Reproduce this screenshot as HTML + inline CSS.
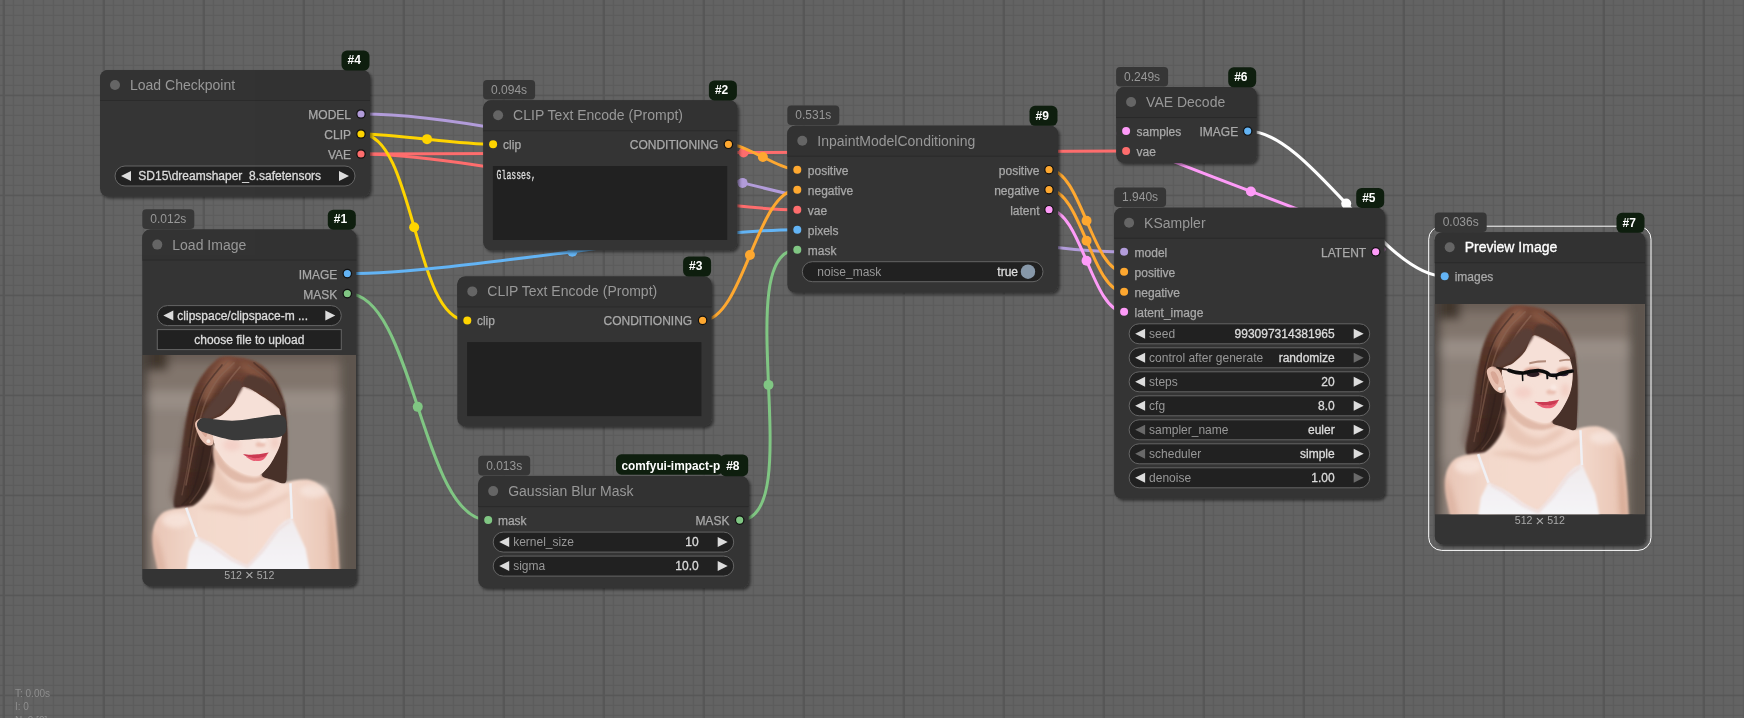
<!DOCTYPE html>
<html lang="en">
<head>
<meta charset="utf-8">
<title>ComfyUI</title>
<style>
html,body{margin:0;padding:0;background:#646464;overflow:hidden}
body{width:1744px;height:718px;position:relative;font-family:"Liberation Sans", Arial, sans-serif}
svg{position:absolute;left:0;top:0;will-change:transform;opacity:.999}
svg text{font-family:"Liberation Sans", Arial, sans-serif}
#stats{position:absolute;left:15px;top:687px;font-size:10px;line-height:13.4px;color:#8e8e8e;white-space:pre}
</style>
</head>
<body>
<svg width="1744" height="718" viewBox="0 0 1744 718">
<defs>
<filter id="sh" x="-10%" y="-10%" width="130%" height="130%"><feDropShadow dx="2" dy="2" stdDeviation="1.5" flood-color="#000" flood-opacity="0.5"/></filter>
</defs>
<rect x="0" y="0" width="1744" height="718" fill="#646464"/>
<path d="M2.85 0h1.3v718h-1.3zM12.85 0h1.3v718h-1.3zM22.85 0h1.3v718h-1.3zM32.85 0h1.3v718h-1.3zM42.85 0h1.3v718h-1.3zM52.85 0h1.3v718h-1.3zM62.85 0h1.3v718h-1.3zM72.85 0h1.3v718h-1.3zM82.85 0h1.3v718h-1.3zM92.85 0h1.3v718h-1.3zM102.85 0h1.3v718h-1.3zM112.85 0h1.3v718h-1.3zM122.85 0h1.3v718h-1.3zM132.85 0h1.3v718h-1.3zM142.85 0h1.3v718h-1.3zM152.85 0h1.3v718h-1.3zM162.85 0h1.3v718h-1.3zM172.85 0h1.3v718h-1.3zM182.85 0h1.3v718h-1.3zM192.85 0h1.3v718h-1.3zM202.85 0h1.3v718h-1.3zM212.85 0h1.3v718h-1.3zM222.85 0h1.3v718h-1.3zM232.85 0h1.3v718h-1.3zM242.85 0h1.3v718h-1.3zM252.85 0h1.3v718h-1.3zM262.85 0h1.3v718h-1.3zM272.85 0h1.3v718h-1.3zM282.85 0h1.3v718h-1.3zM292.85 0h1.3v718h-1.3zM302.85 0h1.3v718h-1.3zM312.85 0h1.3v718h-1.3zM322.85 0h1.3v718h-1.3zM332.85 0h1.3v718h-1.3zM342.85 0h1.3v718h-1.3zM352.85 0h1.3v718h-1.3zM362.85 0h1.3v718h-1.3zM372.85 0h1.3v718h-1.3zM382.85 0h1.3v718h-1.3zM392.85 0h1.3v718h-1.3zM402.85 0h1.3v718h-1.3zM412.85 0h1.3v718h-1.3zM422.85 0h1.3v718h-1.3zM432.85 0h1.3v718h-1.3zM442.85 0h1.3v718h-1.3zM452.85 0h1.3v718h-1.3zM462.85 0h1.3v718h-1.3zM472.85 0h1.3v718h-1.3zM482.85 0h1.3v718h-1.3zM492.85 0h1.3v718h-1.3zM502.85 0h1.3v718h-1.3zM512.85 0h1.3v718h-1.3zM522.85 0h1.3v718h-1.3zM532.85 0h1.3v718h-1.3zM542.85 0h1.3v718h-1.3zM552.85 0h1.3v718h-1.3zM562.85 0h1.3v718h-1.3zM572.85 0h1.3v718h-1.3zM582.85 0h1.3v718h-1.3zM592.85 0h1.3v718h-1.3zM602.85 0h1.3v718h-1.3zM612.85 0h1.3v718h-1.3zM622.85 0h1.3v718h-1.3zM632.85 0h1.3v718h-1.3zM642.85 0h1.3v718h-1.3zM652.85 0h1.3v718h-1.3zM662.85 0h1.3v718h-1.3zM672.85 0h1.3v718h-1.3zM682.85 0h1.3v718h-1.3zM692.85 0h1.3v718h-1.3zM702.85 0h1.3v718h-1.3zM712.85 0h1.3v718h-1.3zM722.85 0h1.3v718h-1.3zM732.85 0h1.3v718h-1.3zM742.85 0h1.3v718h-1.3zM752.85 0h1.3v718h-1.3zM762.85 0h1.3v718h-1.3zM772.85 0h1.3v718h-1.3zM782.85 0h1.3v718h-1.3zM792.85 0h1.3v718h-1.3zM802.85 0h1.3v718h-1.3zM812.85 0h1.3v718h-1.3zM822.85 0h1.3v718h-1.3zM832.85 0h1.3v718h-1.3zM842.85 0h1.3v718h-1.3zM852.85 0h1.3v718h-1.3zM862.85 0h1.3v718h-1.3zM872.85 0h1.3v718h-1.3zM882.85 0h1.3v718h-1.3zM892.85 0h1.3v718h-1.3zM902.85 0h1.3v718h-1.3zM912.85 0h1.3v718h-1.3zM922.85 0h1.3v718h-1.3zM932.85 0h1.3v718h-1.3zM942.85 0h1.3v718h-1.3zM952.85 0h1.3v718h-1.3zM962.85 0h1.3v718h-1.3zM972.85 0h1.3v718h-1.3zM982.85 0h1.3v718h-1.3zM992.85 0h1.3v718h-1.3zM1002.85 0h1.3v718h-1.3zM1012.85 0h1.3v718h-1.3zM1022.85 0h1.3v718h-1.3zM1032.85 0h1.3v718h-1.3zM1042.85 0h1.3v718h-1.3zM1052.85 0h1.3v718h-1.3zM1062.85 0h1.3v718h-1.3zM1072.85 0h1.3v718h-1.3zM1082.85 0h1.3v718h-1.3zM1092.85 0h1.3v718h-1.3zM1102.85 0h1.3v718h-1.3zM1112.85 0h1.3v718h-1.3zM1122.85 0h1.3v718h-1.3zM1132.85 0h1.3v718h-1.3zM1142.85 0h1.3v718h-1.3zM1152.85 0h1.3v718h-1.3zM1162.85 0h1.3v718h-1.3zM1172.85 0h1.3v718h-1.3zM1182.85 0h1.3v718h-1.3zM1192.85 0h1.3v718h-1.3zM1202.85 0h1.3v718h-1.3zM1212.85 0h1.3v718h-1.3zM1222.85 0h1.3v718h-1.3zM1232.85 0h1.3v718h-1.3zM1242.85 0h1.3v718h-1.3zM1252.85 0h1.3v718h-1.3zM1262.85 0h1.3v718h-1.3zM1272.85 0h1.3v718h-1.3zM1282.85 0h1.3v718h-1.3zM1292.85 0h1.3v718h-1.3zM1302.85 0h1.3v718h-1.3zM1312.85 0h1.3v718h-1.3zM1322.85 0h1.3v718h-1.3zM1332.85 0h1.3v718h-1.3zM1342.85 0h1.3v718h-1.3zM1352.85 0h1.3v718h-1.3zM1362.85 0h1.3v718h-1.3zM1372.85 0h1.3v718h-1.3zM1382.85 0h1.3v718h-1.3zM1392.85 0h1.3v718h-1.3zM1402.85 0h1.3v718h-1.3zM1412.85 0h1.3v718h-1.3zM1422.85 0h1.3v718h-1.3zM1432.85 0h1.3v718h-1.3zM1442.85 0h1.3v718h-1.3zM1452.85 0h1.3v718h-1.3zM1462.85 0h1.3v718h-1.3zM1472.85 0h1.3v718h-1.3zM1482.85 0h1.3v718h-1.3zM1492.85 0h1.3v718h-1.3zM1502.85 0h1.3v718h-1.3zM1512.85 0h1.3v718h-1.3zM1522.85 0h1.3v718h-1.3zM1532.85 0h1.3v718h-1.3zM1542.85 0h1.3v718h-1.3zM1552.85 0h1.3v718h-1.3zM1562.85 0h1.3v718h-1.3zM1572.85 0h1.3v718h-1.3zM1582.85 0h1.3v718h-1.3zM1592.85 0h1.3v718h-1.3zM1602.85 0h1.3v718h-1.3zM1612.85 0h1.3v718h-1.3zM1622.85 0h1.3v718h-1.3zM1632.85 0h1.3v718h-1.3zM1642.85 0h1.3v718h-1.3zM1652.85 0h1.3v718h-1.3zM1662.85 0h1.3v718h-1.3zM1672.85 0h1.3v718h-1.3zM1682.85 0h1.3v718h-1.3zM1692.85 0h1.3v718h-1.3zM1702.85 0h1.3v718h-1.3zM1712.85 0h1.3v718h-1.3zM1722.85 0h1.3v718h-1.3zM1732.85 0h1.3v718h-1.3zM1742.85 0h1.3v718h-1.3zM0 4.75h1744v1.3h-1744zM0 14.75h1744v1.3h-1744zM0 24.75h1744v1.3h-1744zM0 34.75h1744v1.3h-1744zM0 44.75h1744v1.3h-1744zM0 54.75h1744v1.3h-1744zM0 64.75h1744v1.3h-1744zM0 74.75h1744v1.3h-1744zM0 84.75h1744v1.3h-1744zM0 94.75h1744v1.3h-1744zM0 104.75h1744v1.3h-1744zM0 114.75h1744v1.3h-1744zM0 124.75h1744v1.3h-1744zM0 134.75h1744v1.3h-1744zM0 144.75h1744v1.3h-1744zM0 154.75h1744v1.3h-1744zM0 164.75h1744v1.3h-1744zM0 174.75h1744v1.3h-1744zM0 184.75h1744v1.3h-1744zM0 194.75h1744v1.3h-1744zM0 204.75h1744v1.3h-1744zM0 214.75h1744v1.3h-1744zM0 224.75h1744v1.3h-1744zM0 234.75h1744v1.3h-1744zM0 244.75h1744v1.3h-1744zM0 254.75h1744v1.3h-1744zM0 264.75h1744v1.3h-1744zM0 274.75h1744v1.3h-1744zM0 284.75h1744v1.3h-1744zM0 294.75h1744v1.3h-1744zM0 304.75h1744v1.3h-1744zM0 314.75h1744v1.3h-1744zM0 324.75h1744v1.3h-1744zM0 334.75h1744v1.3h-1744zM0 344.75h1744v1.3h-1744zM0 354.75h1744v1.3h-1744zM0 364.75h1744v1.3h-1744zM0 374.75h1744v1.3h-1744zM0 384.75h1744v1.3h-1744zM0 394.75h1744v1.3h-1744zM0 404.75h1744v1.3h-1744zM0 414.75h1744v1.3h-1744zM0 424.75h1744v1.3h-1744zM0 434.75h1744v1.3h-1744zM0 444.75h1744v1.3h-1744zM0 454.75h1744v1.3h-1744zM0 464.75h1744v1.3h-1744zM0 474.75h1744v1.3h-1744zM0 484.75h1744v1.3h-1744zM0 494.75h1744v1.3h-1744zM0 504.75h1744v1.3h-1744zM0 514.75h1744v1.3h-1744zM0 524.75h1744v1.3h-1744zM0 534.75h1744v1.3h-1744zM0 544.75h1744v1.3h-1744zM0 554.75h1744v1.3h-1744zM0 564.75h1744v1.3h-1744zM0 574.75h1744v1.3h-1744zM0 584.75h1744v1.3h-1744zM0 594.75h1744v1.3h-1744zM0 604.75h1744v1.3h-1744zM0 614.75h1744v1.3h-1744zM0 624.75h1744v1.3h-1744zM0 634.75h1744v1.3h-1744zM0 644.75h1744v1.3h-1744zM0 654.75h1744v1.3h-1744zM0 664.75h1744v1.3h-1744zM0 674.75h1744v1.3h-1744zM0 684.75h1744v1.3h-1744zM0 694.75h1744v1.3h-1744zM0 704.75h1744v1.3h-1744zM0 714.75h1744v1.3h-1744z" fill="#5d5d5d"/>
<path d="M2.75 0h2.2v718h-2.2zM102.75 0h2.2v718h-2.2zM202.75 0h2.2v718h-2.2zM302.75 0h2.2v718h-2.2zM402.75 0h2.2v718h-2.2zM502.75 0h2.2v718h-2.2zM602.75 0h2.2v718h-2.2zM702.75 0h2.2v718h-2.2zM802.75 0h2.2v718h-2.2zM902.75 0h2.2v718h-2.2zM1002.75 0h2.2v718h-2.2zM1102.75 0h2.2v718h-2.2zM1202.75 0h2.2v718h-2.2zM1302.75 0h2.2v718h-2.2zM1402.75 0h2.2v718h-2.2zM1502.75 0h2.2v718h-2.2zM1602.75 0h2.2v718h-2.2zM1702.75 0h2.2v718h-2.2zM0 94.65h1744v1.7h-1744zM0 194.65h1744v1.7h-1744zM0 294.65h1744v1.7h-1744zM0 394.65h1744v1.7h-1744zM0 494.65h1744v1.7h-1744zM0 594.65h1744v1.7h-1744zM0 694.65h1744v1.7h-1744z" fill="#585858"/>
<g id="links">
<path d="M361 114C554.86 114 930.24 251.8 1124.1 251.8" fill="none" stroke="#B39DDB" stroke-width="3"/>
<circle cx="742.55" cy="182.9" r="5" fill="#B39DDB"/>
<path d="M361 154C470.96 154 687.34 209.7 797.3 209.7" fill="none" stroke="#FF6E6E" stroke-width="3"/>
<circle cx="579.15" cy="181.85" r="5" fill="#FF6E6E"/>
<path d="M361 154C552.28 154 934.82 151.05 1126.1 151.05" fill="none" stroke="#FF6E6E" stroke-width="3"/>
<circle cx="743.55" cy="152.53" r="5" fill="#FF6E6E"/>
<path d="M361 134C394.13 134 459.97 144.3 493.1 144.3" fill="none" stroke="#FFD500" stroke-width="3"/>
<circle cx="427.05" cy="139.15" r="5" fill="#FFD500"/>
<path d="M361 134C414.65 134 413.65 320.4 467.3 320.4" fill="none" stroke="#FFD500" stroke-width="3"/>
<circle cx="414.15" cy="227.2" r="5" fill="#FFD500"/>
<path d="M347.3 273.6C460.33 273.6 684.27 229.7 797.3 229.7" fill="none" stroke="#64B5F6" stroke-width="3"/>
<circle cx="572.3" cy="251.65" r="5" fill="#64B5F6"/>
<path d="M347.3 293.6C413.99 293.6 421.51 520.1 488.2 520.1" fill="none" stroke="#81C784" stroke-width="3"/>
<circle cx="417.75" cy="406.85" r="5" fill="#81C784"/>
<path d="M739.7 520.1C808.82 520.1 728.18 249.7 797.3 249.7" fill="none" stroke="#81C784" stroke-width="3"/>
<circle cx="768.5" cy="384.9" r="5" fill="#81C784"/>
<path d="M728.4 144.3C746.76 144.3 778.94 169.7 797.3 169.7" fill="none" stroke="#FFA931" stroke-width="3"/>
<circle cx="762.85" cy="157" r="5" fill="#FFA931"/>
<path d="M702.6 320.4C742.95 320.4 756.95 189.7 797.3 189.7" fill="none" stroke="#FFA931" stroke-width="3"/>
<circle cx="749.95" cy="255.05" r="5" fill="#FFA931"/>
<path d="M1049 169.7C1080.69 169.7 1092.41 271.8 1124.1 271.8" fill="none" stroke="#FFA931" stroke-width="3"/>
<circle cx="1086.55" cy="220.75" r="5" fill="#FFA931"/>
<path d="M1049 189.7C1080.69 189.7 1092.41 291.8 1124.1 291.8" fill="none" stroke="#FFA931" stroke-width="3"/>
<circle cx="1086.55" cy="240.75" r="5" fill="#FFA931"/>
<path d="M1049 209.7C1080.69 209.7 1092.41 311.8 1124.1 311.8" fill="none" stroke="#FF9CF9" stroke-width="3"/>
<circle cx="1086.55" cy="260.75" r="5" fill="#FF9CF9"/>
<path d="M1375.7 251.8C1445.02 251.8 1056.78 131.05 1126.1 131.05" fill="none" stroke="#FF9CF9" stroke-width="3"/>
<circle cx="1250.9" cy="191.43" r="5" fill="#FF9CF9"/>
<path d="M1247.7 131.05C1308.87 131.05 1383.53 276.2 1444.7 276.2" fill="none" stroke="#ffffff" stroke-width="3"/>
<circle cx="1346.2" cy="203.62" r="5" fill="#ffffff"/>
</g>
<g id="nodes">
<rect x="100" y="70" width="270" height="126.5" rx="8" fill="#353535" filter="url(#sh)"/>
<path d="M100 100v-22a8 8 0 0 1 8-8h254a8 8 0 0 1 8 8v22z" fill="#333"/>
<rect x="100" y="100" width="270" height="1" fill="#2b2b2b"/>
<circle cx="115" cy="85" r="5" fill="#666"/>
<text x="130" y="90" font-size="14" fill="#999">Load Checkpoint</text>
<circle cx="361" cy="114" r="4.2" fill="#B39DDB" stroke="#111" stroke-width="1.2"/>
<text x="351" y="118.9" font-size="12" fill="#aaa" text-anchor="end" stroke="#aaa" stroke-width=".25">MODEL</text>
<circle cx="361" cy="134" r="4.2" fill="#FFD500" stroke="#111" stroke-width="1.2"/>
<text x="351" y="138.9" font-size="12" fill="#aaa" text-anchor="end" stroke="#aaa" stroke-width=".25">CLIP</text>
<circle cx="361" cy="154" r="4.2" fill="#FF6E6E" stroke="#111" stroke-width="1.2"/>
<text x="351" y="158.9" font-size="12" fill="#aaa" text-anchor="end" stroke="#aaa" stroke-width=".25">VAE</text>
<rect x="115" y="166" width="240" height="20" rx="10" fill="#222" stroke="#666" stroke-width="1"/>
<path d="M131 171L121 176L131 181z" fill="#ddd"/>
<path d="M339 171L349 176L339 181z" fill="#ddd"/>
<text x="138.3" y="179.9" font-size="12" fill="#ddd" stroke="#ddd" stroke-width=".3">SD15\dreamshaper_8.safetensors</text>
<rect x="341.5" y="50.6" width="28" height="20" rx="5.5" fill="#0f1f0f"/>
<text x="347.5" y="64.3" font-size="12" fill="#fff" font-weight="bold">#4</text>
<rect x="142.3" y="229.6" width="214" height="356.6" rx="8" fill="#353535" filter="url(#sh)"/>
<path d="M142.3 259.6v-22a8 8 0 0 1 8-8h198a8 8 0 0 1 8 8v22z" fill="#333"/>
<rect x="142.3" y="259.6" width="214" height="1" fill="#2b2b2b"/>
<circle cx="157.3" cy="244.6" r="5" fill="#666"/>
<text x="172.3" y="249.6" font-size="14" fill="#999">Load Image</text>
<circle cx="347.3" cy="273.6" r="4.2" fill="#64B5F6" stroke="#111" stroke-width="1.2"/>
<text x="337.3" y="278.5" font-size="12" fill="#aaa" text-anchor="end" stroke="#aaa" stroke-width=".25">IMAGE</text>
<circle cx="347.3" cy="293.6" r="4.2" fill="#81C784" stroke="#111" stroke-width="1.2"/>
<text x="337.3" y="298.5" font-size="12" fill="#aaa" text-anchor="end" stroke="#aaa" stroke-width=".25">MASK</text>
<rect x="157.3" y="305.6" width="184" height="20" rx="10" fill="#222" stroke="#666" stroke-width="1"/>
<path d="M173.3 310.6L163.3 315.6L173.3 320.6z" fill="#ddd"/>
<path d="M325.3 310.6L335.3 315.6L325.3 320.6z" fill="#ddd"/>
<text x="177.3" y="319.5" font-size="12" fill="#ddd" stroke="#ddd" stroke-width=".3">clipspace/clipspace-m ...</text>
<rect x="157.3" y="329.6" width="184" height="20" fill="#222" stroke="#666" stroke-width="1"/>
<text x="249.3" y="343.6" font-size="12" fill="#ddd" text-anchor="middle" stroke="#ddd" stroke-width=".3">choose file to upload</text>
<g transform="translate(142 354.90) scale(1.0000)" clip-path="url(#clipA)">
<defs>
<clipPath id="clipA"><rect x="0" y="0" width="214" height="214"/></clipPath>
<filter id="b1A" filterUnits="userSpaceOnUse" x="-20" y="-20" width="254" height="254"><feGaussianBlur stdDeviation="0.9"/></filter>
<filter id="b2A" filterUnits="userSpaceOnUse" x="-20" y="-20" width="254" height="254"><feGaussianBlur stdDeviation="2.5"/></filter>
<filter id="b3A" filterUnits="userSpaceOnUse" x="-20" y="-20" width="254" height="254"><feGaussianBlur stdDeviation="5"/></filter>
<filter id="b0A" filterUnits="userSpaceOnUse" x="-20" y="-20" width="254" height="254"><feGaussianBlur stdDeviation="0.45"/></filter>
<linearGradient id="hairA" x1="0" y1="0" x2="0" y2="1"><stop offset="0" stop-color="#7a4c3c"/><stop offset=".3" stop-color="#573529"/><stop offset="1" stop-color="#3e2822"/></linearGradient>
<linearGradient id="skinA" x1="0" y1="0" x2="1" y2="0"><stop offset="0" stop-color="#e9c6b6"/><stop offset=".25" stop-color="#f4dacd"/><stop offset=".7" stop-color="#f6ddd1"/><stop offset="1" stop-color="#e8c3b1"/></linearGradient>
<linearGradient id="dressA" x1="0" y1="0" x2="0" y2="1"><stop offset="0" stop-color="#f1ecee"/><stop offset="1" stop-color="#f6f6f9"/></linearGradient>
</defs>
<rect x="0" y="0" width="214" height="214" fill="#8a7f77"/>
<g filter="url(#b3A)">
<rect x="-10" y="-10" width="240" height="46" fill="#82766d"/>
<rect x="-10" y="-14" width="240" height="22" fill="#6a5f57"/>
<rect x="-14" y="-14" width="40" height="30" fill="#43382f"/>
<rect x="-10" y="36" width="240" height="18" fill="#9a8f87"/>
<rect x="-10" y="54" width="70" height="170" fill="#8d827a"/>
<rect x="140" y="54" width="60" height="100" fill="#938982"/>
<rect x="-12" y="-10" width="18" height="240" fill="#4e4642"/>
<rect x="198" y="-10" width="30" height="240" fill="#5f5650"/>
<rect x="8" y="100" width="30" height="60" fill="#968b83"/>
</g>
<path d="M84 1C76.7 1.2 74.9 4.4 70.7 8C66.5 11.6 62 17.7 58.7 22.6C55.4 27.5 53 32.6 51 37.6C49 42.6 47.8 47.6 46.6 52.6C45.4 57.6 44.5 62.7 43.6 67.7C42.7 72.7 42.1 77.7 41.4 82.7C40.7 87.7 40.2 91.6 39.4 97.8C38.5 104 37.5 110.9 36.3 120C35.1 129.1 30 146.8 32.3 152.3C34.6 157.8 43.7 155.1 50 153C56.3 150.9 61.7 143.8 70 140C78.3 136.2 89.5 132 100 130C110.5 128 126 128.3 133 128C140 127.7 140.1 130.3 142 128C143.9 125.7 143.9 120.4 144.5 114C145.1 107.6 145.2 97.2 145.3 89.5C145.4 81.8 145.4 75.2 144.8 68C144.2 60.8 144 53.7 142 46.5C140 39.3 137.6 31.6 133 25C128.4 18.4 122.7 11 114.5 7C106.3 3 91.3 0.8 84 1Z" fill="url(#hairA)" filter="url(#b1A)"/>
<path d="M44 60C42.3 61.7 38.7 86.7 36 100C33.3 113.3 27.3 131.7 28 140C28.7 148.3 37 158.3 40 150C43 141.7 45.3 105 46 90C46.7 75 45.7 58.3 44 60Z" fill="#5b4038" opacity=".35" filter="url(#b2A)"/>
<path d="M82 6C78 8 71.7 16 68 22C64.3 28 60.3 38 60 42C59.7 46 63 48.7 66 46C69 43.3 73.7 32 78 26C82.3 20 91.3 13.3 92 10C92.7 6.7 86 4 82 6Z" fill="#a8745c" opacity=".55" filter="url(#b2A)"/>
<path d="M104 8C107.3 9 113.7 13.3 118 18C122.3 22.7 129 32.7 130 36C131 39.3 127.3 40.3 124 38C120.7 35.7 114.3 26.3 110 22C105.7 17.7 99 14.3 98 12C97 9.7 100.7 7 104 8Z" fill="#93604a" opacity=".6" filter="url(#b2A)"/>
<path d="M60 70C57 74.3 53.7 97.3 52 110C50.3 122.7 48 141.3 50 146C52 150.7 60.7 144 64 138C67.3 132 69 119 70 110C71 101 71.7 90.7 70 84C68.3 77.3 63 65.7 60 70Z" fill="#33221f" opacity=".55" filter="url(#b2A)"/>
<path d="M92 8C89.3 10.7 80.7 17.7 76 24C71.3 30.3 67.3 38 64 46C60.7 54 58.3 63 56 72C53.7 81 52 90.3 50 100C48 109.7 45 125 44 130" fill="none" stroke="#8b6757" stroke-width="1.6" opacity="0.55" stroke-linecap="round" filter="url(#b0A)"/>
<path d="M86 6C83 9.3 73 18.3 68 26C63 33.7 59 43 56 52C53 61 51.7 70.3 50 80C48.3 89.7 47.7 100 46 110C44.3 120 41 135 40 140" fill="none" stroke="#7a584a" stroke-width="1.4" opacity="0.5" stroke-linecap="round" filter="url(#b0A)"/>
<path d="M98 12C95.7 15 88.3 23.3 84 30C79.7 36.7 75.3 46.3 72 52C68.7 57.7 65.3 62 64 64" fill="none" stroke="#9a7563" stroke-width="1.6" opacity="0.5" stroke-linecap="round" filter="url(#b0A)"/>
<path d="M80 10C77 14 66.7 25.3 62 34C57.3 42.7 54.5 52.3 52 62C49.5 71.7 47.8 87 47 92" fill="none" stroke="#2f1f1c" stroke-width="1.6" opacity="0.45" stroke-linecap="round" filter="url(#b0A)"/>
<path d="M70 92C69.3 95.3 68 105 66 112C64 119 61 128 58 134C55 140 49.7 145.7 48 148" fill="none" stroke="#6e4f43" stroke-width="1.4" opacity="0.5" stroke-linecap="round" filter="url(#b0A)"/>
<path d="M62 92C61.2 96 59 108.3 57 116C55 123.7 52.8 132.3 50 138C47.2 143.7 41.7 148 40 150" fill="none" stroke="#2f1f1c" stroke-width="1.8" opacity="0.4" stroke-linecap="round" filter="url(#b0A)"/>
<path d="M106 10C108.7 12 117.3 17 122 22C126.7 27 130.8 33.7 134 40C137.2 46.3 139.8 56.7 141 60" fill="none" stroke="#7b5a4c" stroke-width="1.4" opacity="0.5" stroke-linecap="round" filter="url(#b0A)"/>
<path d="M112 8C115 10.7 125.3 18 130 24C134.7 30 138.3 40.7 140 44" fill="none" stroke="#2f1f1c" stroke-width="1.6" opacity="0.4" stroke-linecap="round" filter="url(#b0A)"/>
<path d="M16 216L11.8 197C9 180 10 165 22 157C32 152.5 44 152.5 51 151C58 147 66 137 70.9 125L73 111L71 89L119 100L119.6 121C128 124 136 126.5 143 127.8C150 125.5 160 123.5 168 125C180 128 190 140 193 158L196 190L197.5 216Z" fill="url(#skinA)" filter="url(#b1A)"/>
<path d="M73 94C75.2 95 80.7 105.8 85 110C89.3 114.2 94.5 116.9 99 119C103.5 121.1 108.5 122.2 112 122.5C115.5 122.8 117.7 120.9 120 121C122.3 121.1 127.3 121.8 126 123C124.7 124.2 117.3 127.5 112 128C106.7 128.5 99.3 128 94 126C88.7 124 83.7 119.7 80 116C76.3 112.3 73.2 107.7 72 104C70.8 100.3 70.8 93 73 94Z" fill="#dcb19f" opacity=".75" filter="url(#b1A)"/>
<path d="M73 108C75 107.3 78.2 117.7 82 122C85.8 126.3 91.3 131.7 96 134C100.7 136.3 105.3 137 110 136C114.7 135 120 129.3 124 128C128 126.7 134.7 126 134 128C133.3 130 125.7 137 120 140C114.3 143 106.7 146 100 146C93.3 146 85 143.3 80 140C75 136.7 71.2 131.3 70 126C68.8 120.7 71 108.7 73 108Z" fill="#e3bba9" opacity=".6" filter="url(#b2A)"/>
<path d="M56 152C56.3 151 72 149.7 80 150C88 150.3 95.7 154.7 104 154C112.3 153.3 123 148.7 130 146C137 143.3 143.3 138.7 146 138C148.7 137.3 149 139.7 146 142C143 144.3 135 149 128 152C121 155 112.3 159.3 104 160C95.7 160.7 86 157.3 78 156C70 154.7 55.7 153 56 152Z" fill="#dcb09c" opacity=".5" filter="url(#b2A)"/>
<ellipse cx="172" cy="136" rx="14" ry="7" fill="#fbeee8" opacity=".6" filter="url(#b2A)"/>
<ellipse cx="34" cy="165" rx="14" ry="8" fill="#fbeae2" opacity=".7" filter="url(#b2A)"/>
<path d="M187 150C187.8 148.3 190.5 159 192 170C193.5 181 196.5 208.3 196 216C195.5 223.7 190.5 222 189 216C187.5 210 187.3 191 187 180C186.7 169 186.2 151.7 187 150Z" fill="#c9977f" opacity=".5" filter="url(#b2A)"/>
<path d="M10 176C9 177.7 11 193.3 12 200C13 206.7 14 213.3 16 216C18 218.7 23.7 220.3 24 216C24.3 211.7 20.3 196.7 18 190C15.7 183.3 11 174.3 10 176Z" fill="#d2a38f" opacity=".45" filter="url(#b2A)"/>
<path d="M100.7 32C105 30.7 111.9 36.3 118 40C124.1 43.7 133.8 49.5 137.5 54.2C141.2 58.9 140 63.4 140.4 68C140.8 72.6 140.5 77.6 139.8 82C139.1 86.4 138.3 89.9 136.3 94.5C134.3 99.1 130.8 105.8 128 109.8C125.2 113.8 122.4 117 119.6 118.8C116.8 120.6 114.8 121 111.3 120.8C107.8 120.6 103.1 119.5 98.7 117.4C94.3 115.3 88.8 112.1 84.8 108.4C80.8 104.7 77.5 99.7 75 95C72.5 90.3 71 84.8 70 80C69 75.2 67.3 69.3 69 66C70.7 62.7 76.2 63 80 60C83.8 57 88.5 52.7 92 48C95.5 43.3 96.4 33.3 100.7 32Z" fill="#f7e1d8" filter="url(#b0A)"/>
<path d="M53 69C53 66.6 54.7 65.3 56 64.5C57.3 63.7 59.3 63.4 61 64C62.7 64.6 64.5 65.7 66 68C67.5 70.3 69.1 74.7 70 78C70.9 81.3 72 85.9 71.5 88C71 90.1 68.8 90.7 67 90.5C65.2 90.3 62.8 88.9 61 87C59.2 85.1 57.3 82 56 79C54.7 76 53 71.4 53 69Z" fill="#e9c2b2" filter="url(#b0A)"/>
<path d="M57 70C57.2 68.5 59.7 68 61 69C62.3 70 64.5 73.8 65 76C65.5 78.2 64.8 81.7 64 82C63.2 82.3 61.2 80 60 78C58.8 76 56.8 71.5 57 70Z" fill="#d39e8c" opacity=".7" filter="url(#b0A)"/>
<circle cx="66.4" cy="86.3" r="1.9" fill="#f6ebe4" filter="url(#b0A)"/>
<ellipse cx="90" cy="90" rx="9" ry="6" fill="#f3c4bb" opacity=".55" filter="url(#b2A)"/>
<ellipse cx="133" cy="88" rx="4" ry="7" fill="#f0c0b4" opacity=".55" filter="url(#b2A)"/>
<ellipse cx="118.5" cy="89.6" rx="5" ry="2.6" fill="#e9bcae" opacity=".85" filter="url(#b1A)"/>
<ellipse cx="121" cy="85" rx="3.2" ry="3" fill="#fbece6" opacity=".8" filter="url(#b1A)"/>
<path d="M104 101.6C104.5 101.3 109.3 102.9 112 103C114.7 103.1 117.8 102.6 120 102C122.2 101.4 125.2 99 125.4 99.4C125.6 99.8 123.1 103.5 121.4 104.6C119.7 105.7 117.5 106.1 115.4 106.2C113.3 106.3 110.9 105.8 109 105C107.1 104.2 103.5 101.9 104 101.6Z" fill="#ea5f75" filter="url(#b0A)"/>
<path d="M101.3 99.6C101.3 99.1 105.7 99.9 108 99.9C110.3 99.9 113.2 99.6 115.4 99.4C117.6 99.2 119.1 98.9 121 98.6C122.9 98.3 126.4 97.1 126.6 97.6C126.8 98.1 123.9 100.9 122 101.8C120.1 102.7 117.3 103.1 115 103.2C112.7 103.3 110.3 103.2 108 102.6C105.7 102 101.3 100 101.3 99.6Z" fill="#cc3b52" filter="url(#b0A)"/>
<path d="M137.5 54C137.3 57 140.4 63.3 140.8 68C141.2 72.7 140.9 77.5 140.2 82C139.5 86.5 138.6 90.3 136.6 95C134.6 99.7 131.2 105.7 128.4 110C125.6 114.3 119.7 118.2 120 120.6C120.3 123 126.2 123.4 130 124.6C133.8 125.8 140.5 129.8 143 128C145.5 126.2 144.4 120.4 144.8 114C145.2 107.6 145.4 97.2 145.4 89.5C145.4 81.8 145.4 74.6 144.8 68C144.2 61.4 143.2 52.3 142 50C140.8 47.7 137.7 51 137.5 54Z" fill="#49322c" filter="url(#b0A)"/>
<path d="M101 30C101.3 33.3 95.5 41.3 92 46C88.5 50.7 84 55 80 58C76 61 71.3 63.3 68 64C64.7 64.7 59.3 65.3 60 62C60.7 58.7 67 50 72 44C77 38 85.2 28.3 90 26C94.8 23.7 100.7 26.7 101 30Z" fill="#5a3f37" filter="url(#b1A)"/>
<path d="M101 30C102.7 33 111.8 34.2 118 38C124.2 41.8 134 51.3 138 53C142 54.7 143.7 52.2 142 48C140.3 43.8 133.7 32.7 128 28C122.3 23.3 112.5 19.7 108 20C103.5 20.3 99.3 27 101 30Z" fill="#543a33" filter="url(#b1A)"/>
<path d="M54.9 69.6C54.8 67.9 55.8 66.1 57 65C58.2 63.9 59 63.1 62 63C65 62.9 70.3 64.1 75 64.6C79.7 65.1 85.2 65.8 90 65.8C94.8 65.8 99 65.2 104 64.6C109 64 114.7 62.8 120 62C125.3 61.2 132.2 59.6 136 59.8C139.8 60 141.6 61.1 143 63C144.4 64.9 144.6 68.5 144.6 71C144.6 73.5 144.4 76.1 143 78C141.6 79.9 140.2 81.4 136 82.3C131.8 83.2 124 83.1 118 83.6C112 84 104.7 84.8 100 85C95.3 85.2 94 85.5 90 85C86 84.5 80.3 82.9 76 81.8C71.7 80.7 67.1 79.3 64 78.2C60.9 77.1 59 76.8 57.5 75.4C56 74 55 71.3 54.9 69.6Z" fill="#3a3a3a" filter="url(#b0A)"/>
<path d="M54.7 181.5 L61 185 L68.5 188 L78 194 L90 203 L100 208.5 L105.3 210.6 L112 204 L120.6 193.7 L128 183 L136 172.3 L143 166 L149.8 163 L156 177 L163.6 193.7 L168.2 218 L44 218 L47 197Z" fill="url(#dressA)" filter="url(#b1A)"/>
<path d="M57 184 L68.5 190 L90 205 L105.3 212 L120.6 196 L136 175 L148 166" fill="none" stroke="#efdcd9" stroke-width="3" opacity=".7" filter="url(#b1A)"/>
<path d="M44.2 153L54.8 182" stroke="#f1f1f5" stroke-width="2.6" fill="none" filter="url(#b0A)"/>
<path d="M148.4 128.5L149.9 164" stroke="#f1f1f5" stroke-width="2.5" fill="none" filter="url(#b0A)"/>
</g>
<text x="249.3" y="578.6" font-size="10.6" fill="#aaa" text-anchor="middle">512 <tspan font-size="15" dy="1.2">×</tspan><tspan dy="-1.2"> </tspan>512</text>
<rect x="327.8" y="209.7" width="28" height="20" rx="5.5" fill="#0f1f0f"/>
<text x="333.8" y="223.4" font-size="12" fill="#fff" font-weight="bold">#1</text>
<rect x="142.3" y="209.3" width="52" height="19.6" rx="4" fill="#373737"/>
<text x="150.3" y="223" font-size="12" fill="#999">0.012s</text>
<rect x="483.1" y="100.3" width="254.3" height="150" rx="8" fill="#353535" filter="url(#sh)"/>
<path d="M483.1 130.3v-22a8 8 0 0 1 8-8h238.3a8 8 0 0 1 8 8v22z" fill="#333"/>
<rect x="483.1" y="130.3" width="254.3" height="1" fill="#2b2b2b"/>
<circle cx="498.1" cy="115.3" r="5" fill="#666"/>
<text x="513.1" y="120.3" font-size="14" fill="#999">CLIP Text Encode (Prompt)</text>
<circle cx="493.1" cy="144.3" r="4" fill="#FFD500"/>
<text x="503.1" y="149.2" font-size="12" fill="#aaa" stroke="#aaa" stroke-width=".25">clip</text>
<circle cx="728.4" cy="144.3" r="4.2" fill="#FFA931" stroke="#111" stroke-width="1.2"/>
<text x="718.4" y="149.2" font-size="12" fill="#aaa" text-anchor="end" stroke="#aaa" stroke-width=".25">CONDITIONING</text>
<rect x="492.9" y="166" width="234.3" height="74" fill="#222"/>
<text x="496.6" y="178.6" font-size="13.3" fill="#ddd" style='font-family:"Liberation Mono", "DejaVu Sans Mono", monospace' textLength="39.2" lengthAdjust="spacingAndGlyphs" stroke="#ddd" stroke-width=".35">Glasses,</text>
<rect x="708.9" y="80.4" width="28" height="20" rx="5.5" fill="#0f1f0f"/>
<text x="714.9" y="94.1" font-size="12" fill="#fff" font-weight="bold">#2</text>
<rect x="483.1" y="80" width="52" height="19.6" rx="4" fill="#373737"/>
<text x="491.1" y="93.7" font-size="12" fill="#999">0.094s</text>
<rect x="457.3" y="276.4" width="254.3" height="150" rx="8" fill="#353535" filter="url(#sh)"/>
<path d="M457.3 306.4v-22a8 8 0 0 1 8-8h238.3a8 8 0 0 1 8 8v22z" fill="#333"/>
<rect x="457.3" y="306.4" width="254.3" height="1" fill="#2b2b2b"/>
<circle cx="472.3" cy="291.4" r="5" fill="#666"/>
<text x="487.3" y="296.4" font-size="14" fill="#999">CLIP Text Encode (Prompt)</text>
<circle cx="467.3" cy="320.4" r="4" fill="#FFD500"/>
<text x="476.9" y="325.3" font-size="12" fill="#aaa" stroke="#aaa" stroke-width=".25">clip</text>
<circle cx="702.6" cy="320.4" r="4.2" fill="#FFA931" stroke="#111" stroke-width="1.2"/>
<text x="692.2" y="325.3" font-size="12" fill="#aaa" text-anchor="end" stroke="#aaa" stroke-width=".25">CONDITIONING</text>
<rect x="467.1" y="342.1" width="234.3" height="74" fill="#222"/>
<rect x="683.1" y="256.5" width="28" height="20" rx="5.5" fill="#0f1f0f"/>
<text x="689.1" y="270.2" font-size="12" fill="#fff" font-weight="bold">#3</text>
<rect x="478.2" y="476.1" width="270.5" height="112" rx="8" fill="#353535" filter="url(#sh)"/>
<path d="M478.2 506.1v-22a8 8 0 0 1 8-8h254.5a8 8 0 0 1 8 8v22z" fill="#333"/>
<rect x="478.2" y="506.1" width="270.5" height="1" fill="#2b2b2b"/>
<circle cx="493.2" cy="491.1" r="5" fill="#666"/>
<text x="508.2" y="496.1" font-size="14" fill="#999">Gaussian Blur Mask</text>
<circle cx="488.2" cy="520.1" r="4" fill="#81C784"/>
<text x="497.9" y="525" font-size="12" fill="#aaa" stroke="#aaa" stroke-width=".25">mask</text>
<circle cx="739.7" cy="520.1" r="4.2" fill="#81C784" stroke="#111" stroke-width="1.2"/>
<text x="729.4" y="525" font-size="12" fill="#aaa" text-anchor="end" stroke="#aaa" stroke-width=".25">MASK</text>
<rect x="493.2" y="532.1" width="240.5" height="20" rx="10" fill="#222" stroke="#666" stroke-width="1"/>
<path d="M509.2 537.1L499.2 542.1L509.2 547.1z" fill="#ddd"/>
<path d="M717.7 537.1L727.7 542.1L717.7 547.1z" fill="#ddd"/>
<text x="513.2" y="546" font-size="12" fill="#999">kernel_size</text>
<text x="698.7" y="546" font-size="12" fill="#ddd" text-anchor="end" stroke="#ddd" stroke-width=".3">10</text>
<rect x="493.2" y="556.1" width="240.5" height="20" rx="10" fill="#222" stroke="#666" stroke-width="1"/>
<path d="M509.2 561.1L499.2 566.1L509.2 571.1z" fill="#ddd"/>
<path d="M717.7 561.1L727.7 566.1L717.7 571.1z" fill="#ddd"/>
<text x="513.2" y="570" font-size="12" fill="#999">sigma</text>
<text x="698.7" y="570" font-size="12" fill="#ddd" text-anchor="end" stroke="#ddd" stroke-width=".3">10.0</text>
<rect x="616" y="454.3" width="107" height="20.4" rx="5.5" fill="#0f1f0f"/>
<text x="621.5" y="469.8" font-size="11.85" fill="#fff" font-weight="bold">comfyui-impact-p</text>
<rect x="720.2" y="454.4" width="28" height="21.8" rx="5.5" fill="#0f1f0f"/>
<text x="726.2" y="469.9" font-size="12" fill="#fff" font-weight="bold">#8</text>
<rect x="478.2" y="455.8" width="52" height="19.6" rx="4" fill="#373737"/>
<text x="486.2" y="469.5" font-size="12" fill="#999">0.013s</text>
<rect x="787.3" y="125.7" width="270.7" height="166.8" rx="8" fill="#353535" filter="url(#sh)"/>
<path d="M787.3 155.7v-22a8 8 0 0 1 8-8h254.7a8 8 0 0 1 8 8v22z" fill="#333"/>
<rect x="787.3" y="155.7" width="270.7" height="1" fill="#2b2b2b"/>
<circle cx="802.3" cy="140.7" r="5" fill="#666"/>
<text x="817.3" y="145.7" font-size="14" fill="#999">InpaintModelConditioning</text>
<circle cx="797.3" cy="169.7" r="4" fill="#FFA931"/>
<text x="807.8" y="174.6" font-size="12" fill="#aaa" stroke="#aaa" stroke-width=".25">positive</text>
<circle cx="797.3" cy="189.7" r="4" fill="#FFA931"/>
<text x="807.8" y="194.6" font-size="12" fill="#aaa" stroke="#aaa" stroke-width=".25">negative</text>
<circle cx="797.3" cy="209.7" r="4" fill="#FF6E6E"/>
<text x="807.8" y="214.6" font-size="12" fill="#aaa" stroke="#aaa" stroke-width=".25">vae</text>
<circle cx="797.3" cy="229.7" r="4" fill="#64B5F6"/>
<text x="807.8" y="234.6" font-size="12" fill="#aaa" stroke="#aaa" stroke-width=".25">pixels</text>
<circle cx="797.3" cy="249.7" r="4" fill="#81C784"/>
<text x="807.8" y="254.6" font-size="12" fill="#aaa" stroke="#aaa" stroke-width=".25">mask</text>
<circle cx="1049" cy="169.7" r="4.2" fill="#FFA931" stroke="#111" stroke-width="1.2"/>
<text x="1039.5" y="174.6" font-size="12" fill="#aaa" text-anchor="end" stroke="#aaa" stroke-width=".25">positive</text>
<circle cx="1049" cy="189.7" r="4.2" fill="#FFA931" stroke="#111" stroke-width="1.2"/>
<text x="1039.5" y="194.6" font-size="12" fill="#aaa" text-anchor="end" stroke="#aaa" stroke-width=".25">negative</text>
<circle cx="1049" cy="209.7" r="4.2" fill="#FF9CF9" stroke="#111" stroke-width="1.2"/>
<text x="1039.5" y="214.6" font-size="12" fill="#aaa" text-anchor="end" stroke="#aaa" stroke-width=".25">latent</text>
<rect x="802.3" y="261.7" width="240.7" height="20" rx="10" fill="#222" stroke="#666" stroke-width="1"/>
<text x="817.3" y="275.7" font-size="12" fill="#999">noise_mask</text>
<text x="1018" y="275.7" font-size="12" fill="#ddd" text-anchor="end" stroke="#ddd" stroke-width=".3">true</text>
<circle cx="1028" cy="271.7" r="7.2" fill="#8899aa"/>
<rect x="1029.5" y="105.8" width="28" height="20" rx="5.5" fill="#0f1f0f"/>
<text x="1035.5" y="119.5" font-size="12" fill="#fff" font-weight="bold">#9</text>
<rect x="787.3" y="105.4" width="52" height="19.6" rx="4" fill="#373737"/>
<text x="795.3" y="119.1" font-size="12" fill="#999">0.531s</text>
<rect x="1116.1" y="87.05" width="140.6" height="76" rx="8" fill="#353535" filter="url(#sh)"/>
<path d="M1116.1 117.05v-22a8 8 0 0 1 8-8h124.6a8 8 0 0 1 8 8v22z" fill="#333"/>
<rect x="1116.1" y="117.05" width="140.6" height="1" fill="#2b2b2b"/>
<circle cx="1131.1" cy="102.05" r="5" fill="#666"/>
<text x="1146.1" y="107.05" font-size="14" fill="#999">VAE Decode</text>
<circle cx="1126.1" cy="131.05" r="4" fill="#FF9CF9"/>
<text x="1136.6" y="135.95" font-size="12" fill="#aaa" stroke="#aaa" stroke-width=".25">samples</text>
<circle cx="1126.1" cy="151.05" r="4" fill="#FF6E6E"/>
<text x="1136.6" y="155.95" font-size="12" fill="#aaa" stroke="#aaa" stroke-width=".25">vae</text>
<circle cx="1247.7" cy="131.05" r="4.2" fill="#64B5F6" stroke="#111" stroke-width="1.2"/>
<text x="1238.2" y="135.95" font-size="12" fill="#aaa" text-anchor="end" stroke="#aaa" stroke-width=".25">IMAGE</text>
<rect x="1228.2" y="67.35" width="28" height="20" rx="5.5" fill="#0f1f0f"/>
<text x="1234.2" y="81.05" font-size="12" fill="#fff" font-weight="bold">#6</text>
<rect x="1116.1" y="66.95" width="52" height="19.6" rx="4" fill="#373737"/>
<text x="1124.1" y="80.65" font-size="12" fill="#999">0.249s</text>
<rect x="1114.1" y="207.8" width="270.6" height="291" rx="8" fill="#353535" filter="url(#sh)"/>
<path d="M1114.1 237.8v-22a8 8 0 0 1 8-8h254.6a8 8 0 0 1 8 8v22z" fill="#333"/>
<rect x="1114.1" y="237.8" width="270.6" height="1" fill="#2b2b2b"/>
<circle cx="1129.1" cy="222.8" r="5" fill="#666"/>
<text x="1144.1" y="227.8" font-size="14" fill="#999">KSampler</text>
<circle cx="1124.1" cy="251.8" r="4" fill="#B39DDB"/>
<text x="1134.6" y="256.7" font-size="12" fill="#aaa" stroke="#aaa" stroke-width=".25">model</text>
<circle cx="1124.1" cy="271.8" r="4" fill="#FFA931"/>
<text x="1134.6" y="276.7" font-size="12" fill="#aaa" stroke="#aaa" stroke-width=".25">positive</text>
<circle cx="1124.1" cy="291.8" r="4" fill="#FFA931"/>
<text x="1134.6" y="296.7" font-size="12" fill="#aaa" stroke="#aaa" stroke-width=".25">negative</text>
<circle cx="1124.1" cy="311.8" r="4" fill="#FF9CF9"/>
<text x="1134.6" y="316.7" font-size="12" fill="#aaa" stroke="#aaa" stroke-width=".25">latent_image</text>
<circle cx="1375.7" cy="251.8" r="4.2" fill="#FF9CF9" stroke="#111" stroke-width="1.2"/>
<text x="1366.2" y="256.7" font-size="12" fill="#aaa" text-anchor="end" stroke="#aaa" stroke-width=".25">LATENT</text>
<rect x="1129.1" y="323.8" width="240.6" height="20" rx="10" fill="#222" stroke="#666" stroke-width="1"/>
<path d="M1145.1 328.8L1135.1 333.8L1145.1 338.8z" fill="#ddd"/>
<path d="M1353.7 328.8L1363.7 333.8L1353.7 338.8z" fill="#ddd"/>
<text x="1149.1" y="337.7" font-size="12" fill="#999">seed</text>
<text x="1334.7" y="337.7" font-size="12" fill="#ddd" text-anchor="end" stroke="#ddd" stroke-width=".3">993097314381965</text>
<rect x="1129.1" y="347.8" width="240.6" height="20" rx="10" fill="#222" stroke="#666" stroke-width="1"/>
<path d="M1145.1 352.8L1135.1 357.8L1145.1 362.8z" fill="#ddd"/>
<path d="M1353.7 352.8L1363.7 357.8L1353.7 362.8z" fill="#6a6a6a"/>
<text x="1149.1" y="361.7" font-size="12" fill="#999">control after generate</text>
<text x="1334.7" y="361.7" font-size="12" fill="#ddd" text-anchor="end" stroke="#ddd" stroke-width=".3">randomize</text>
<rect x="1129.1" y="371.8" width="240.6" height="20" rx="10" fill="#222" stroke="#666" stroke-width="1"/>
<path d="M1145.1 376.8L1135.1 381.8L1145.1 386.8z" fill="#ddd"/>
<path d="M1353.7 376.8L1363.7 381.8L1353.7 386.8z" fill="#ddd"/>
<text x="1149.1" y="385.7" font-size="12" fill="#999">steps</text>
<text x="1334.7" y="385.7" font-size="12" fill="#ddd" text-anchor="end" stroke="#ddd" stroke-width=".3">20</text>
<rect x="1129.1" y="395.8" width="240.6" height="20" rx="10" fill="#222" stroke="#666" stroke-width="1"/>
<path d="M1145.1 400.8L1135.1 405.8L1145.1 410.8z" fill="#ddd"/>
<path d="M1353.7 400.8L1363.7 405.8L1353.7 410.8z" fill="#ddd"/>
<text x="1149.1" y="409.7" font-size="12" fill="#999">cfg</text>
<text x="1334.7" y="409.7" font-size="12" fill="#ddd" text-anchor="end" stroke="#ddd" stroke-width=".3">8.0</text>
<rect x="1129.1" y="419.8" width="240.6" height="20" rx="10" fill="#222" stroke="#666" stroke-width="1"/>
<path d="M1145.1 424.8L1135.1 429.8L1145.1 434.8z" fill="#6a6a6a"/>
<path d="M1353.7 424.8L1363.7 429.8L1353.7 434.8z" fill="#ddd"/>
<text x="1149.1" y="433.7" font-size="12" fill="#999">sampler_name</text>
<text x="1334.7" y="433.7" font-size="12" fill="#ddd" text-anchor="end" stroke="#ddd" stroke-width=".3">euler</text>
<rect x="1129.1" y="443.8" width="240.6" height="20" rx="10" fill="#222" stroke="#666" stroke-width="1"/>
<path d="M1145.1 448.8L1135.1 453.8L1145.1 458.8z" fill="#6a6a6a"/>
<path d="M1353.7 448.8L1363.7 453.8L1353.7 458.8z" fill="#ddd"/>
<text x="1149.1" y="457.7" font-size="12" fill="#999">scheduler</text>
<text x="1334.7" y="457.7" font-size="12" fill="#ddd" text-anchor="end" stroke="#ddd" stroke-width=".3">simple</text>
<rect x="1129.1" y="467.8" width="240.6" height="20" rx="10" fill="#222" stroke="#666" stroke-width="1"/>
<path d="M1145.1 472.8L1135.1 477.8L1145.1 482.8z" fill="#ddd"/>
<path d="M1353.7 472.8L1363.7 477.8L1353.7 482.8z" fill="#6a6a6a"/>
<text x="1149.1" y="481.7" font-size="12" fill="#999">denoise</text>
<text x="1334.7" y="481.7" font-size="12" fill="#ddd" text-anchor="end" stroke="#ddd" stroke-width=".3">1.00</text>
<rect x="1356.2" y="187.9" width="28" height="20" rx="5.5" fill="#0f1f0f"/>
<text x="1362.2" y="201.6" font-size="12" fill="#fff" font-weight="bold">#5</text>
<rect x="1114.1" y="187.5" width="52" height="19.6" rx="4" fill="#373737"/>
<text x="1122.1" y="201.2" font-size="12" fill="#999">1.940s</text>
<rect x="1434.7" y="232.2" width="210.3" height="312.2" rx="8" fill="#353535" filter="url(#sh)"/>
<path d="M1434.7 262.2v-22a8 8 0 0 1 8-8h194.3a8 8 0 0 1 8 8v22z" fill="#333"/>
<rect x="1434.7" y="262.2" width="210.3" height="1" fill="#2b2b2b"/>
<circle cx="1449.7" cy="247.2" r="5" fill="#666"/>
<text x="1464.7" y="252.2" font-size="14" fill="#fff" stroke="#fff" stroke-width=".35">Preview Image</text>
<rect x="1428.7" y="226.2" width="222.3" height="324.2" rx="13" fill="none" stroke="#fff" stroke-width="1"/>
<circle cx="1444.7" cy="276.2" r="4" fill="#64B5F6"/>
<text x="1454.7" y="281.1" font-size="12" fill="#aaa" stroke="#aaa" stroke-width=".25">images</text>
<g transform="translate(1434.7 304.00) scale(0.9822)" clip-path="url(#clipB)">
<defs>
<clipPath id="clipB"><rect x="0" y="0" width="214" height="214"/></clipPath>
<filter id="b1B" filterUnits="userSpaceOnUse" x="-20" y="-20" width="254" height="254"><feGaussianBlur stdDeviation="0.9"/></filter>
<filter id="b2B" filterUnits="userSpaceOnUse" x="-20" y="-20" width="254" height="254"><feGaussianBlur stdDeviation="2.5"/></filter>
<filter id="b3B" filterUnits="userSpaceOnUse" x="-20" y="-20" width="254" height="254"><feGaussianBlur stdDeviation="5"/></filter>
<filter id="b0B" filterUnits="userSpaceOnUse" x="-20" y="-20" width="254" height="254"><feGaussianBlur stdDeviation="0.45"/></filter>
<linearGradient id="hairB" x1="0" y1="0" x2="0" y2="1"><stop offset="0" stop-color="#7a4c3c"/><stop offset=".3" stop-color="#573529"/><stop offset="1" stop-color="#3e2822"/></linearGradient>
<linearGradient id="skinB" x1="0" y1="0" x2="1" y2="0"><stop offset="0" stop-color="#e9c6b6"/><stop offset=".25" stop-color="#f4dacd"/><stop offset=".7" stop-color="#f6ddd1"/><stop offset="1" stop-color="#e8c3b1"/></linearGradient>
<linearGradient id="dressB" x1="0" y1="0" x2="0" y2="1"><stop offset="0" stop-color="#f1ecee"/><stop offset="1" stop-color="#f6f6f9"/></linearGradient>
</defs>
<rect x="0" y="0" width="214" height="214" fill="#8a7f77"/>
<g filter="url(#b3B)">
<rect x="-10" y="-10" width="240" height="46" fill="#82766d"/>
<rect x="-10" y="-14" width="240" height="22" fill="#6a5f57"/>
<rect x="-14" y="-14" width="40" height="30" fill="#43382f"/>
<rect x="-10" y="36" width="240" height="18" fill="#9a8f87"/>
<rect x="-10" y="54" width="70" height="170" fill="#8d827a"/>
<rect x="140" y="54" width="60" height="100" fill="#938982"/>
<rect x="-12" y="-10" width="18" height="240" fill="#4e4642"/>
<rect x="198" y="-10" width="30" height="240" fill="#5f5650"/>
<rect x="8" y="100" width="30" height="60" fill="#968b83"/>
</g>
<path d="M84 1C76.7 1.2 74.9 4.4 70.7 8C66.5 11.6 62 17.7 58.7 22.6C55.4 27.5 53 32.6 51 37.6C49 42.6 47.8 47.6 46.6 52.6C45.4 57.6 44.5 62.7 43.6 67.7C42.7 72.7 42.1 77.7 41.4 82.7C40.7 87.7 40.2 91.6 39.4 97.8C38.5 104 37.5 110.9 36.3 120C35.1 129.1 30 146.8 32.3 152.3C34.6 157.8 43.7 155.1 50 153C56.3 150.9 61.7 143.8 70 140C78.3 136.2 89.5 132 100 130C110.5 128 126 128.3 133 128C140 127.7 140.1 130.3 142 128C143.9 125.7 143.9 120.4 144.5 114C145.1 107.6 145.2 97.2 145.3 89.5C145.4 81.8 145.4 75.2 144.8 68C144.2 60.8 144 53.7 142 46.5C140 39.3 137.6 31.6 133 25C128.4 18.4 122.7 11 114.5 7C106.3 3 91.3 0.8 84 1Z" fill="url(#hairB)" filter="url(#b1B)"/>
<path d="M44 60C42.3 61.7 38.7 86.7 36 100C33.3 113.3 27.3 131.7 28 140C28.7 148.3 37 158.3 40 150C43 141.7 45.3 105 46 90C46.7 75 45.7 58.3 44 60Z" fill="#5b4038" opacity=".35" filter="url(#b2B)"/>
<path d="M82 6C78 8 71.7 16 68 22C64.3 28 60.3 38 60 42C59.7 46 63 48.7 66 46C69 43.3 73.7 32 78 26C82.3 20 91.3 13.3 92 10C92.7 6.7 86 4 82 6Z" fill="#a8745c" opacity=".55" filter="url(#b2B)"/>
<path d="M104 8C107.3 9 113.7 13.3 118 18C122.3 22.7 129 32.7 130 36C131 39.3 127.3 40.3 124 38C120.7 35.7 114.3 26.3 110 22C105.7 17.7 99 14.3 98 12C97 9.7 100.7 7 104 8Z" fill="#93604a" opacity=".6" filter="url(#b2B)"/>
<path d="M60 70C57 74.3 53.7 97.3 52 110C50.3 122.7 48 141.3 50 146C52 150.7 60.7 144 64 138C67.3 132 69 119 70 110C71 101 71.7 90.7 70 84C68.3 77.3 63 65.7 60 70Z" fill="#33221f" opacity=".55" filter="url(#b2B)"/>
<path d="M92 8C89.3 10.7 80.7 17.7 76 24C71.3 30.3 67.3 38 64 46C60.7 54 58.3 63 56 72C53.7 81 52 90.3 50 100C48 109.7 45 125 44 130" fill="none" stroke="#8b6757" stroke-width="1.6" opacity="0.55" stroke-linecap="round" filter="url(#b0B)"/>
<path d="M86 6C83 9.3 73 18.3 68 26C63 33.7 59 43 56 52C53 61 51.7 70.3 50 80C48.3 89.7 47.7 100 46 110C44.3 120 41 135 40 140" fill="none" stroke="#7a584a" stroke-width="1.4" opacity="0.5" stroke-linecap="round" filter="url(#b0B)"/>
<path d="M98 12C95.7 15 88.3 23.3 84 30C79.7 36.7 75.3 46.3 72 52C68.7 57.7 65.3 62 64 64" fill="none" stroke="#9a7563" stroke-width="1.6" opacity="0.5" stroke-linecap="round" filter="url(#b0B)"/>
<path d="M80 10C77 14 66.7 25.3 62 34C57.3 42.7 54.5 52.3 52 62C49.5 71.7 47.8 87 47 92" fill="none" stroke="#2f1f1c" stroke-width="1.6" opacity="0.45" stroke-linecap="round" filter="url(#b0B)"/>
<path d="M70 92C69.3 95.3 68 105 66 112C64 119 61 128 58 134C55 140 49.7 145.7 48 148" fill="none" stroke="#6e4f43" stroke-width="1.4" opacity="0.5" stroke-linecap="round" filter="url(#b0B)"/>
<path d="M62 92C61.2 96 59 108.3 57 116C55 123.7 52.8 132.3 50 138C47.2 143.7 41.7 148 40 150" fill="none" stroke="#2f1f1c" stroke-width="1.8" opacity="0.4" stroke-linecap="round" filter="url(#b0B)"/>
<path d="M106 10C108.7 12 117.3 17 122 22C126.7 27 130.8 33.7 134 40C137.2 46.3 139.8 56.7 141 60" fill="none" stroke="#7b5a4c" stroke-width="1.4" opacity="0.5" stroke-linecap="round" filter="url(#b0B)"/>
<path d="M112 8C115 10.7 125.3 18 130 24C134.7 30 138.3 40.7 140 44" fill="none" stroke="#2f1f1c" stroke-width="1.6" opacity="0.4" stroke-linecap="round" filter="url(#b0B)"/>
<path d="M16 216L11.8 197C9 180 10 165 22 157C32 152.5 44 152.5 51 151C58 147 66 137 70.9 125L73 111L71 89L119 100L119.6 121C128 124 136 126.5 143 127.8C150 125.5 160 123.5 168 125C180 128 190 140 193 158L196 190L197.5 216Z" fill="url(#skinB)" filter="url(#b1B)"/>
<path d="M73 94C75.2 95 80.7 105.8 85 110C89.3 114.2 94.5 116.9 99 119C103.5 121.1 108.5 122.2 112 122.5C115.5 122.8 117.7 120.9 120 121C122.3 121.1 127.3 121.8 126 123C124.7 124.2 117.3 127.5 112 128C106.7 128.5 99.3 128 94 126C88.7 124 83.7 119.7 80 116C76.3 112.3 73.2 107.7 72 104C70.8 100.3 70.8 93 73 94Z" fill="#dcb19f" opacity=".75" filter="url(#b1B)"/>
<path d="M73 108C75 107.3 78.2 117.7 82 122C85.8 126.3 91.3 131.7 96 134C100.7 136.3 105.3 137 110 136C114.7 135 120 129.3 124 128C128 126.7 134.7 126 134 128C133.3 130 125.7 137 120 140C114.3 143 106.7 146 100 146C93.3 146 85 143.3 80 140C75 136.7 71.2 131.3 70 126C68.8 120.7 71 108.7 73 108Z" fill="#e3bba9" opacity=".6" filter="url(#b2B)"/>
<path d="M56 152C56.3 151 72 149.7 80 150C88 150.3 95.7 154.7 104 154C112.3 153.3 123 148.7 130 146C137 143.3 143.3 138.7 146 138C148.7 137.3 149 139.7 146 142C143 144.3 135 149 128 152C121 155 112.3 159.3 104 160C95.7 160.7 86 157.3 78 156C70 154.7 55.7 153 56 152Z" fill="#dcb09c" opacity=".5" filter="url(#b2B)"/>
<ellipse cx="172" cy="136" rx="14" ry="7" fill="#fbeee8" opacity=".6" filter="url(#b2B)"/>
<ellipse cx="34" cy="165" rx="14" ry="8" fill="#fbeae2" opacity=".7" filter="url(#b2B)"/>
<path d="M187 150C187.8 148.3 190.5 159 192 170C193.5 181 196.5 208.3 196 216C195.5 223.7 190.5 222 189 216C187.5 210 187.3 191 187 180C186.7 169 186.2 151.7 187 150Z" fill="#c9977f" opacity=".5" filter="url(#b2B)"/>
<path d="M10 176C9 177.7 11 193.3 12 200C13 206.7 14 213.3 16 216C18 218.7 23.7 220.3 24 216C24.3 211.7 20.3 196.7 18 190C15.7 183.3 11 174.3 10 176Z" fill="#d2a38f" opacity=".45" filter="url(#b2B)"/>
<path d="M100.7 32C105 30.7 111.9 36.3 118 40C124.1 43.7 133.8 49.5 137.5 54.2C141.2 58.9 140 63.4 140.4 68C140.8 72.6 140.5 77.6 139.8 82C139.1 86.4 138.3 89.9 136.3 94.5C134.3 99.1 130.8 105.8 128 109.8C125.2 113.8 122.4 117 119.6 118.8C116.8 120.6 114.8 121 111.3 120.8C107.8 120.6 103.1 119.5 98.7 117.4C94.3 115.3 88.8 112.1 84.8 108.4C80.8 104.7 77.5 99.7 75 95C72.5 90.3 71 84.8 70 80C69 75.2 67.3 69.3 69 66C70.7 62.7 76.2 63 80 60C83.8 57 88.5 52.7 92 48C95.5 43.3 96.4 33.3 100.7 32Z" fill="#f7e1d8" filter="url(#b0B)"/>
<path d="M53 69C53 66.6 54.7 65.3 56 64.5C57.3 63.7 59.3 63.4 61 64C62.7 64.6 64.5 65.7 66 68C67.5 70.3 69.1 74.7 70 78C70.9 81.3 72 85.9 71.5 88C71 90.1 68.8 90.7 67 90.5C65.2 90.3 62.8 88.9 61 87C59.2 85.1 57.3 82 56 79C54.7 76 53 71.4 53 69Z" fill="#e9c2b2" filter="url(#b0B)"/>
<path d="M57 70C57.2 68.5 59.7 68 61 69C62.3 70 64.5 73.8 65 76C65.5 78.2 64.8 81.7 64 82C63.2 82.3 61.2 80 60 78C58.8 76 56.8 71.5 57 70Z" fill="#d39e8c" opacity=".7" filter="url(#b0B)"/>
<circle cx="66.4" cy="86.3" r="1.9" fill="#f6ebe4" filter="url(#b0B)"/>
<ellipse cx="90" cy="90" rx="9" ry="6" fill="#f3c4bb" opacity=".55" filter="url(#b2B)"/>
<ellipse cx="133" cy="88" rx="4" ry="7" fill="#f0c0b4" opacity=".55" filter="url(#b2B)"/>
<ellipse cx="118.5" cy="89.6" rx="5" ry="2.6" fill="#e9bcae" opacity=".85" filter="url(#b1B)"/>
<ellipse cx="121" cy="85" rx="3.2" ry="3" fill="#fbece6" opacity=".8" filter="url(#b1B)"/>
<path d="M104 101.6C104.5 101.3 109.3 102.9 112 103C114.7 103.1 117.8 102.6 120 102C122.2 101.4 125.2 99 125.4 99.4C125.6 99.8 123.1 103.5 121.4 104.6C119.7 105.7 117.5 106.1 115.4 106.2C113.3 106.3 110.9 105.8 109 105C107.1 104.2 103.5 101.9 104 101.6Z" fill="#ea5f75" filter="url(#b0B)"/>
<path d="M101.3 99.6C101.3 99.1 105.7 99.9 108 99.9C110.3 99.9 113.2 99.6 115.4 99.4C117.6 99.2 119.1 98.9 121 98.6C122.9 98.3 126.4 97.1 126.6 97.6C126.8 98.1 123.9 100.9 122 101.8C120.1 102.7 117.3 103.1 115 103.2C112.7 103.3 110.3 103.2 108 102.6C105.7 102 101.3 100 101.3 99.6Z" fill="#cc3b52" filter="url(#b0B)"/>
<path d="M137.5 54C137.3 57 140.4 63.3 140.8 68C141.2 72.7 140.9 77.5 140.2 82C139.5 86.5 138.6 90.3 136.6 95C134.6 99.7 131.2 105.7 128.4 110C125.6 114.3 119.7 118.2 120 120.6C120.3 123 126.2 123.4 130 124.6C133.8 125.8 140.5 129.8 143 128C145.5 126.2 144.4 120.4 144.8 114C145.2 107.6 145.4 97.2 145.4 89.5C145.4 81.8 145.4 74.6 144.8 68C144.2 61.4 143.2 52.3 142 50C140.8 47.7 137.7 51 137.5 54Z" fill="#49322c" filter="url(#b0B)"/>
<path d="M101 30C101.3 33.3 95.5 41.3 92 46C88.5 50.7 84 55 80 58C76 61 71.3 63.3 68 64C64.7 64.7 59.3 65.3 60 62C60.7 58.7 67 50 72 44C77 38 85.2 28.3 90 26C94.8 23.7 100.7 26.7 101 30Z" fill="#5a3f37" filter="url(#b1B)"/>
<path d="M101 30C102.7 33 111.8 34.2 118 38C124.2 41.8 134 51.3 138 53C142 54.7 143.7 52.2 142 48C140.3 43.8 133.7 32.7 128 28C122.3 23.3 112.5 19.7 108 20C103.5 20.3 99.3 27 101 30Z" fill="#543a33" filter="url(#b1B)"/>
<ellipse cx="100.6" cy="68.6" rx="10" ry="4.5" fill="#d99a86" opacity=".75" filter="url(#b1B)"/>
<ellipse cx="131.8" cy="68.2" rx="7.5" ry="4" fill="#d39682" opacity=".7" filter="url(#b1B)"/>
<path d="M96.3 60.5C97.6 60.2 101.3 59.1 104.1 58.7C106.9 58.3 111.8 58.3 113.3 58.3" fill="none" stroke="#a27866" stroke-width="2" opacity=".8" filter="url(#b0B)"/>
<path d="M126.8 58C127.9 57.8 131.3 57 133.2 56.8C135.1 56.7 137.6 56.8 138.5 56.8" fill="none" stroke="#a27866" stroke-width="1.8" opacity=".8" filter="url(#b0B)"/>
<ellipse cx="100.1" cy="71.3" rx="6.6" ry="3" fill="#2a1a22" filter="url(#b0B)"/>
<ellipse cx="130.8" cy="71" rx="5.4" ry="2.6" fill="#2e2030" filter="url(#b0B)"/>
<path d="M62.9 64.5C64.1 64.8 67.8 65.7 70 66.2C72.3 66.7 75.4 67.4 76.4 67.6" fill="none" stroke="#2a1a18" stroke-width="1.8" filter="url(#b0B)"/>
<path d="M75.7 67.6C76.9 68 80.3 69.2 82.8 69.6C85.3 70 88 70.4 90.6 70.2C93.2 70 95.7 68.9 98.4 68.5C101.1 68.1 104.5 67.7 106.9 67.9C109.4 68.1 111.6 68.9 113.3 69.6C115.1 70.3 115.9 71.7 117.6 72.2C119.2 72.6 121.3 72.7 123.3 72.5C125.3 72.2 127.6 71 129.7 70.5C131.7 69.9 133.6 69.4 135.3 69C137 68.7 139.1 68.3 139.9 68.2" fill="none" stroke="#0d0b10" stroke-width="3.7" stroke-linecap="round" filter="url(#b0B)"/>
<path d="M89.3 70.5 L89.6 77.8" fill="none" stroke="#0d0b10" stroke-width="1.6" stroke-linecap="round" filter="url(#b0B)"/>
<path d="M114.5 71.5 L114.7 75.7" fill="none" stroke="#0d0b10" stroke-width="2" stroke-linecap="round" filter="url(#b0B)"/>
<path d="M123.7 72.5 L124 76.1" fill="none" stroke="#0d0b10" stroke-width="1.8" stroke-linecap="round" filter="url(#b0B)"/>
<path d="M54.7 181.5 L61 185 L68.5 188 L78 194 L90 203 L100 208.5 L105.3 210.6 L112 204 L120.6 193.7 L128 183 L136 172.3 L143 166 L149.8 163 L156 177 L163.6 193.7 L168.2 218 L44 218 L47 197Z" fill="url(#dressB)" filter="url(#b1B)"/>
<path d="M57 184 L68.5 190 L90 205 L105.3 212 L120.6 196 L136 175 L148 166" fill="none" stroke="#efdcd9" stroke-width="3" opacity=".7" filter="url(#b1B)"/>
<path d="M44.2 153L54.8 182" stroke="#f1f1f5" stroke-width="2.6" fill="none" filter="url(#b0B)"/>
<path d="M148.4 128.5L149.9 164" stroke="#f1f1f5" stroke-width="2.5" fill="none" filter="url(#b0B)"/>
</g>
<text x="1539.85" y="524.3" font-size="10.6" fill="#aaa" text-anchor="middle">512 <tspan font-size="15" dy="1.2">×</tspan><tspan dy="-1.2"> </tspan>512</text>
<rect x="1616.5" y="212.8" width="28" height="20" rx="5.5" fill="#0f1f0f"/>
<text x="1622.5" y="226.5" font-size="12" fill="#fff" font-weight="bold">#7</text>
<rect x="1434.7" y="212.4" width="52" height="19.6" rx="4" fill="#373737"/>
<text x="1442.7" y="226.1" font-size="12" fill="#999">0.036s</text>
</g>
</svg>
<div id="stats">T: 0.00s
I: 0
N: 9 [9]</div>
</body>
</html>
